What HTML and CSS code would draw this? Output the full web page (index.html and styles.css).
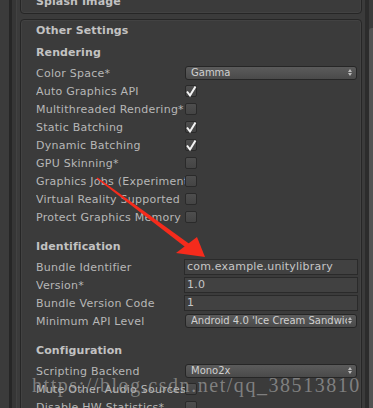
FILE: index.html
```html
<!DOCTYPE html>
<html>
<head>
	<title>Player Settings</title>
	<meta charset="UTF-8">
	<link rel="stylesheet" href="styles.css">
</head>
<body>
	<div class="window">
		<div class="gutter"></div>
		<div class="inspector">
			<div class="box splash">
				<div class="box-title">Splash Image</div>
			</div>
			<div class="box settings">
				<div class="box-title">Other Settings</div>

				<div class="section first">
					<div class="section-title">Rendering</div>
					<div class="row"><span class="label">Color Space*</span><div class="popup"><span class="value">Gamma</span><i class="updown"></i></div></div>
					<div class="row"><span class="label">Auto Graphics API</span><span class="check"><svg viewBox="0 0 12 12"><path d="M2 6.5 L5 10.5 L10.5 1.5" /></svg></span></div>
					<div class="row"><span class="label">Multithreaded Rendering*</span><span class="check"></span></div>
					<div class="row"><span class="label">Static Batching</span><span class="check"><svg viewBox="0 0 12 12"><path d="M2 6.5 L5 10.5 L10.5 1.5" /></svg></span></div>
					<div class="row"><span class="label">Dynamic Batching</span><span class="check"><svg viewBox="0 0 12 12"><path d="M2 6.5 L5 10.5 L10.5 1.5" /></svg></span></div>
					<div class="row"><span class="label">GPU Skinning*</span><span class="check"></span></div>
					<div class="row"><span class="label">Graphics Jobs (Experimental)*</span><span class="check"></span></div>
					<div class="row"><span class="label">Virtual Reality Supported</span><span class="check"></span></div>
					<div class="row"><span class="label">Protect Graphics Memory</span><span class="check"></span></div>
				</div>

				<div class="section">
					<div class="section-title">Identification</div>
					<div class="row"><span class="label">Bundle Identifier</span><div class="field">com.example.unitylibrary</div></div>
					<div class="row"><span class="label">Version*</span><div class="field">1.0</div></div>
					<div class="row"><span class="label">Bundle Version Code</span><div class="field">1</div></div>
					<div class="row"><span class="label">Minimum API Level</span><div class="popup"><span class="value">Android 4.0 'Ice Cream Sandwich' (API level 14)</span><i class="updown"></i></div></div>
				</div>

				<div class="section">
					<div class="section-title">Configuration</div>
					<div class="row"><span class="label">Scripting Backend</span><div class="popup"><span class="value">Mono2x</span><i class="updown"></i></div></div>
					<div class="row"><span class="label">Mute Other Audio Sources</span><span class="check"></span></div>
					<div class="row"><span class="label">Disable HW Statistics*</span><span class="check"></span></div>
				</div>
			</div>
		</div>
		<div class="scroll"><div class="thumb"></div></div>

		<svg class="arrow" width="373" height="408" viewBox="0 0 373 408">
			<polygon points="97.5,177.4 189.5,244 186.5,248 96.5,178.6" />
			<polygon points="197,237 205,257 176,253" />
		</svg>
		<div class="watermark">https://blog.csdn.net/qq_38513810</div>
	</div>
</body>
</html>
```

FILE: styles.css
```css
body {
	margin: 0;
	background: #3b3b3b;
	font: 11px "DejaVu Sans", Verdana, sans-serif;
	color: #b7b7b7;
}

.window {
	position: relative;
	display: flex;
	width: 373px;
	height: 408px;
	overflow: hidden;
}

.gutter {
	width: 20px;
	flex: none;
	background: linear-gradient(to right, #3b3b3b 0 9px, #262626 9px 12px, #363636 12px 16px, #424242 16px 17px, #3b3b3b 17px);
}

.inspector {
	width: 342px;
	flex: none;
}

.box {
	box-sizing: border-box;
	border: 1px solid #262626;
	border-radius: 4px;
	box-shadow: inset 0 0 0 1px #424242;
	padding: 2px 4px 0 15px;
}

.splash {
	height: 24px;
	margin-top: -10px;
	padding-top: 2px;
}

.settings {
	margin-top: 5px;
	height: 420px;
}

.box-title,
.section-title {
	height: 18px;
	line-height: 18px;
	font-weight: bold;
	color: #c2c2c2;
	letter-spacing: 0.1px;
}

.section {
	margin-top: 12px;
}

.section.first {
	margin-top: 4px;
}

.section-title {
	margin-bottom: 2px;
}

.row {
	display: flex;
	align-items: center;
	height: 18px;
}

.label {
	width: 149px;
	flex: none;
	white-space: nowrap;
	overflow: hidden;
	letter-spacing: 0.25px;
}

.popup {
	display: flex;
	align-items: center;
	flex: 1;
	min-width: 0;
	box-sizing: border-box;
	height: 14px;
	padding: 0 3px 0 5px;
	border: 1px solid #262626;
	border-radius: 3px;
	background: linear-gradient(#5b5b5b, #4a4a4a);
	color: #d0d0d0;
	font-size: 10px;
}

.value {
	flex: 1;
	min-width: 0;
	line-height: 12px;
	white-space: nowrap;
	overflow: hidden;
}

.updown {
	position: relative;
	flex: none;
	width: 0;
	height: 0;
	margin: 0 1px 5px 1px;
	border-left: 2px solid transparent;
	border-right: 2px solid transparent;
	border-bottom: 3px solid #bdbdbd;
}

.updown::after {
	content: "";
	position: absolute;
	left: -2px;
	top: 4px;
	border-left: 2px solid transparent;
	border-right: 2px solid transparent;
	border-top: 3px solid #bdbdbd;
}

.field {
	flex: 1;
	box-sizing: border-box;
	height: 16px;
	line-height: 14px;
	margin: 0 -1px;
	padding-left: 2px;
	border: 1px solid #2a2a2a;
	background: #414141;
	color: #c6c6c6;
	letter-spacing: 0.2px;
	white-space: nowrap;
	overflow: hidden;
}

.check {
	position: relative;
	width: 12px;
	height: 12px;
	box-sizing: border-box;
	border: 1px solid #2a2a2a;
	border-radius: 2px;
	background: linear-gradient(#4e4e4e, #444);
}

.check svg {
	position: absolute;
	left: -1px;
	top: -1px;
	width: 12px;
	height: 12px;
	overflow: visible;
}

.check path {
	fill: none;
	stroke: #f4f4f4;
	stroke-width: 2;
}

.scroll {
	flex: none;
	width: 11px;
	background: linear-gradient(to right, #3b3b3b 0 3px, #2c2c2c 3px 7px, #3b3b3b 7px);
}

.thumb {
	margin: 28px 0 0 7px;
	height: 400px;
	border-radius: 3px 0 0 0;
	background: #525252;
}

.arrow {
	position: absolute;
	left: 0;
	top: 0;
	pointer-events: none;
}

.arrow polygon {
	fill: #f52b1c;
}

.watermark {
	position: absolute;
	left: 32px;
	top: 374px;
	font: 20px "Liberation Serif", "Times New Roman", serif;
	letter-spacing: 1.55px;
	color: rgba(175, 175, 175, 0.6);
	white-space: nowrap;
	pointer-events: none;
}
```
